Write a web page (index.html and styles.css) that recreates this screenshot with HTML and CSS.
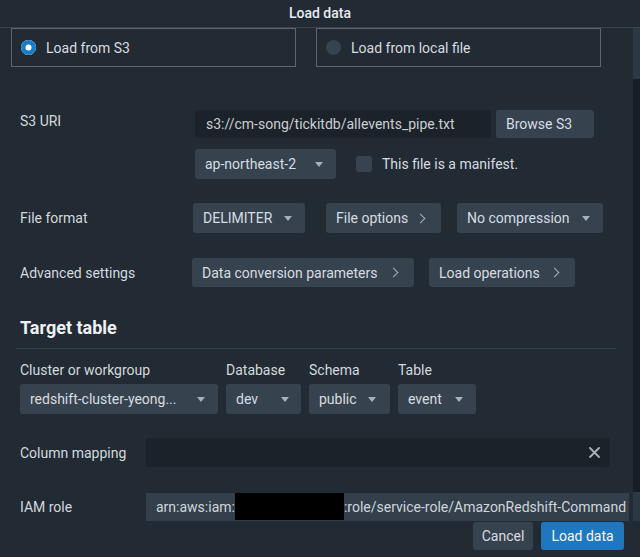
FILE: index.html
```html
<!DOCTYPE html>
<html>
<head>
<meta charset="utf-8">
<link rel="stylesheet" href="styles.css">
</head>
<body>
<div class="header">Load data</div>
<div class="scroll-thumb"></div>
<div class="scroll-track"></div>
<div class="scroll-thumb2"></div>

<div class="sources">
  <div class="card"><span class="radio on"></span><span>Load from S3</span></div>
  <div class="card"><span class="radio"></span><span>Load from local file</span></div>
</div>

<div class="row row-s3">
  <div class="label label-s3">S3 URI</div>
  <div class="stack">
    <div class="line">
      <div class="input uri">s3://cm-song/tickitdb/allevents_pipe.txt</div>
      <div class="btn browse">Browse S3</div>
    </div>
    <div class="line line2">
      <div class="btn select w-region"><span>ap-northeast-2</span><span class="caret"></span></div>
      <span class="checkbox"></span>
      <span class="cb-text">This file is a manifest.</span>
    </div>
  </div>
</div>

<div class="row row-format">
  <div class="label label-format">File format</div>
  <div class="line">
    <div class="btn select w-delim"><span>DELIMITER</span><span class="caret"></span></div>
    <div class="btn select w-fopt"><span>File options</span><span class="chev"></span></div>
    <div class="btn select w-comp"><span>No compression</span><span class="caret"></span></div>
  </div>
</div>

<div class="row row-adv">
  <div class="label label-adv">Advanced settings</div>
  <div class="line">
    <div class="btn select w-conv"><span>Data conversion parameters</span><span class="chev"></span></div>
    <div class="btn select w-ops"><span>Load operations</span><span class="chev"></span></div>
  </div>
</div>

<h2 class="section">Target table</h2>

<div class="targets">
  <div class="col">
    <div class="col-label">Cluster or workgroup</div>
    <div class="btn select w-cluster"><span>redshift-cluster-yeong...</span><span class="caret"></span></div>
  </div>
  <div class="col">
    <div class="col-label">Database</div>
    <div class="btn select w-db"><span>dev</span><span class="caret"></span></div>
  </div>
  <div class="col">
    <div class="col-label">Schema</div>
    <div class="btn select w-schema"><span>public</span><span class="caret"></span></div>
  </div>
  <div class="col">
    <div class="col-label">Table</div>
    <div class="btn select w-table"><span>event</span><span class="caret"></span></div>
  </div>
</div>

<div class="row row-map">
  <div class="label label-wide">Column mapping</div>
  <div class="input mapping">
    <svg class="clear" width="11" height="11" viewBox="0 0 11 11"><path d="M1 1 L10 10 M10 1 L1 10" stroke="#a9b0b7" stroke-width="1.8" stroke-linecap="round"/></svg>
  </div>
</div>

<div class="row row-iam">
  <div class="label label-wide">IAM role</div>
  <div class="iam"><span class="iam-text">arn:aws:iam:</span><span class="redact"></span><span class="iam-text">:role/service-role/AmazonRedshift-Command</span></div>
</div>

<div class="footer">
  <div class="btn cancel">Cancel</div>
  <div class="btn primary">Load data</div>
</div>
</body>
</html>
```
FILE: styles.css
```css
* { box-sizing: border-box; }
html, body { margin: 0; padding: 0; }
body {
  width: 640px;
  height: 557px;
  overflow: hidden;
  position: relative;
  background: #222a33;
  color: #d3d9de;
  font-family: Roboto, "Liberation Sans", sans-serif;
  font-size: 14px;
  line-height: 18px;
}
.header {
  height: 28px;
  border-bottom: 1px solid #3a434c;
  display: flex;
  align-items: center;
  justify-content: center;
  color: #e8ecef;
  font-weight: 500;
  padding-bottom: 1px;
}
.scroll-thumb {
  position: absolute; right: 0; top: 28px; width: 7px; height: 51px; background: #2c3843;
}
.scroll-track {
  position: absolute; right: 0; top: 79px; width: 7px; height: 413px; background: #161d24;
}
.scroll-thumb2 {
  position: absolute; right: 0; top: 492px; width: 7px; height: 29px; background: #2c3843;
}
.sources {
  display: flex;
  gap: 20px;
  margin-left: 11px;
}
.card {
  width: 285px;
  height: 39px;
  border: 1px solid #5f656b;
  display: flex;
  align-items: center;
  padding-left: 9px;
  gap: 10px;
  color: #d6dce1;
}
.radio {
  width: 15px; height: 15px; border-radius: 50%;
  background: #37434f;
  display: inline-block;
  flex: none;
}
.radio.on {
  background: #1b7cc5;
  box-shadow: inset 0 0 0 4.5px #1b7cc5, inset 0 0 0 8px #fff;
}
.row { display: flex; align-items: center; }
.label { padding-left: 20px; color: #d3d9de; flex: none; }
.label-s3 { width: 195px; align-self: flex-start; line-height: 22px; }
.label-format { width: 193px; }
.label-adv { width: 192px; }
.label-wide { width: 146px; }
.row-s3 { margin-top: 43px; align-items: flex-start; }
.stack { display: flex; flex-direction: column; }
.line { display: flex; align-items: center; }
.line2 { margin-top: 11px; }
.input {
  background: #1b2229;
  border-radius: 3px;
  height: 28px;
  display: flex;
  align-items: center;
  padding-left: 11px;
  color: #c9cfd4;
}
.uri { width: 296px; }
.btn {
  background: #36434f;
  border-radius: 3px;
  height: 30px;
  display: flex;
  align-items: center;
  padding: 0 10px;
  color: #d6dce1;
  flex: none;
}
.browse { width: 98px; height: 28px; margin-left: 5px; }
.select { justify-content: space-between; padding-right: 13px; }
.caret {
  width: 0; height: 0;
  border-left: 4px solid transparent;
  border-right: 4px solid transparent;
  border-top: 5px solid #a8b1b9;
  margin-top: 1px;
}
.chev {
  width: 7px; height: 7px;
  border-right: 1.5px solid #a8b1b9;
  border-top: 1.5px solid #a8b1b9;
  transform: rotate(45deg);
  margin-right: 3px;
}
.w-region { width: 141px; }
.checkbox {
  width: 16px; height: 16px; border-radius: 3px; background: #37434f;
  margin-left: 20px; display: inline-block;
}
.cb-text { margin-left: 10px; color: #d6dce1; }
.row-format { margin-top: 24px; }
.w-delim { width: 112px; }
.w-fopt { width: 115px; margin-left: 21px; padding-right: 14px; }
.w-comp { width: 146px; margin-left: 16px; }
.row-adv { margin-top: 25px; }
.row-adv .btn { height: 29px; }
.w-conv { width: 222px; padding-right: 14px; }
.w-ops { width: 146px; margin-left: 15px; padding-right: 14px; }
.section {
  margin: 29px 24px 0 16px;
  padding: 0 0 8px 4px;
  font-size: 18px;
  line-height: 24px;
  font-weight: 700;
  color: #eef1f4;
  border-bottom: 1px solid #36404a;
}
.targets {
  display: flex;
  gap: 8px;
  margin: 12px 0 0 20px;
}
.col { display: flex; flex-direction: column; gap: 5px; }
.col-label { color: #d3d9de; }
.w-cluster { width: 198px; }
.w-db { width: 75px; padding-right: 12px; }
.w-schema { width: 81px; padding-right: 14px; }
.w-table { width: 78px; padding-right: 13px; }
.row-map { margin-top: 24px; }
.mapping {
  width: 464px; height: 29px;
  justify-content: flex-end;
  padding-right: 10px;
}
.clear { display: block; }
.row-iam { margin-top: 26px; }
.iam {
  width: 483px;
  height: 28px;
  background: #333f4b;
  color: #d0d6db;
  padding-left: 10px;
  white-space: nowrap;
  overflow: hidden;
  display: flex;
  align-items: center;
  flex: none;
}
.iam-text { flex: none; }
.redact {
  flex: none;
  display: block;
  width: 109px;
  height: 28px;
  background: #000;
  margin-top: -2px;
}
.footer {
  display: flex;
  justify-content: flex-end;
  gap: 8px;
  margin: 1px 16px 0 0;
}
.cancel { width: 60px; height: 28px; justify-content: center; padding: 0; }
.primary {
  width: 83px; height: 28px; justify-content: center; padding: 0;
  background: #1f78bf; color: #f3f7fa;
}
```
